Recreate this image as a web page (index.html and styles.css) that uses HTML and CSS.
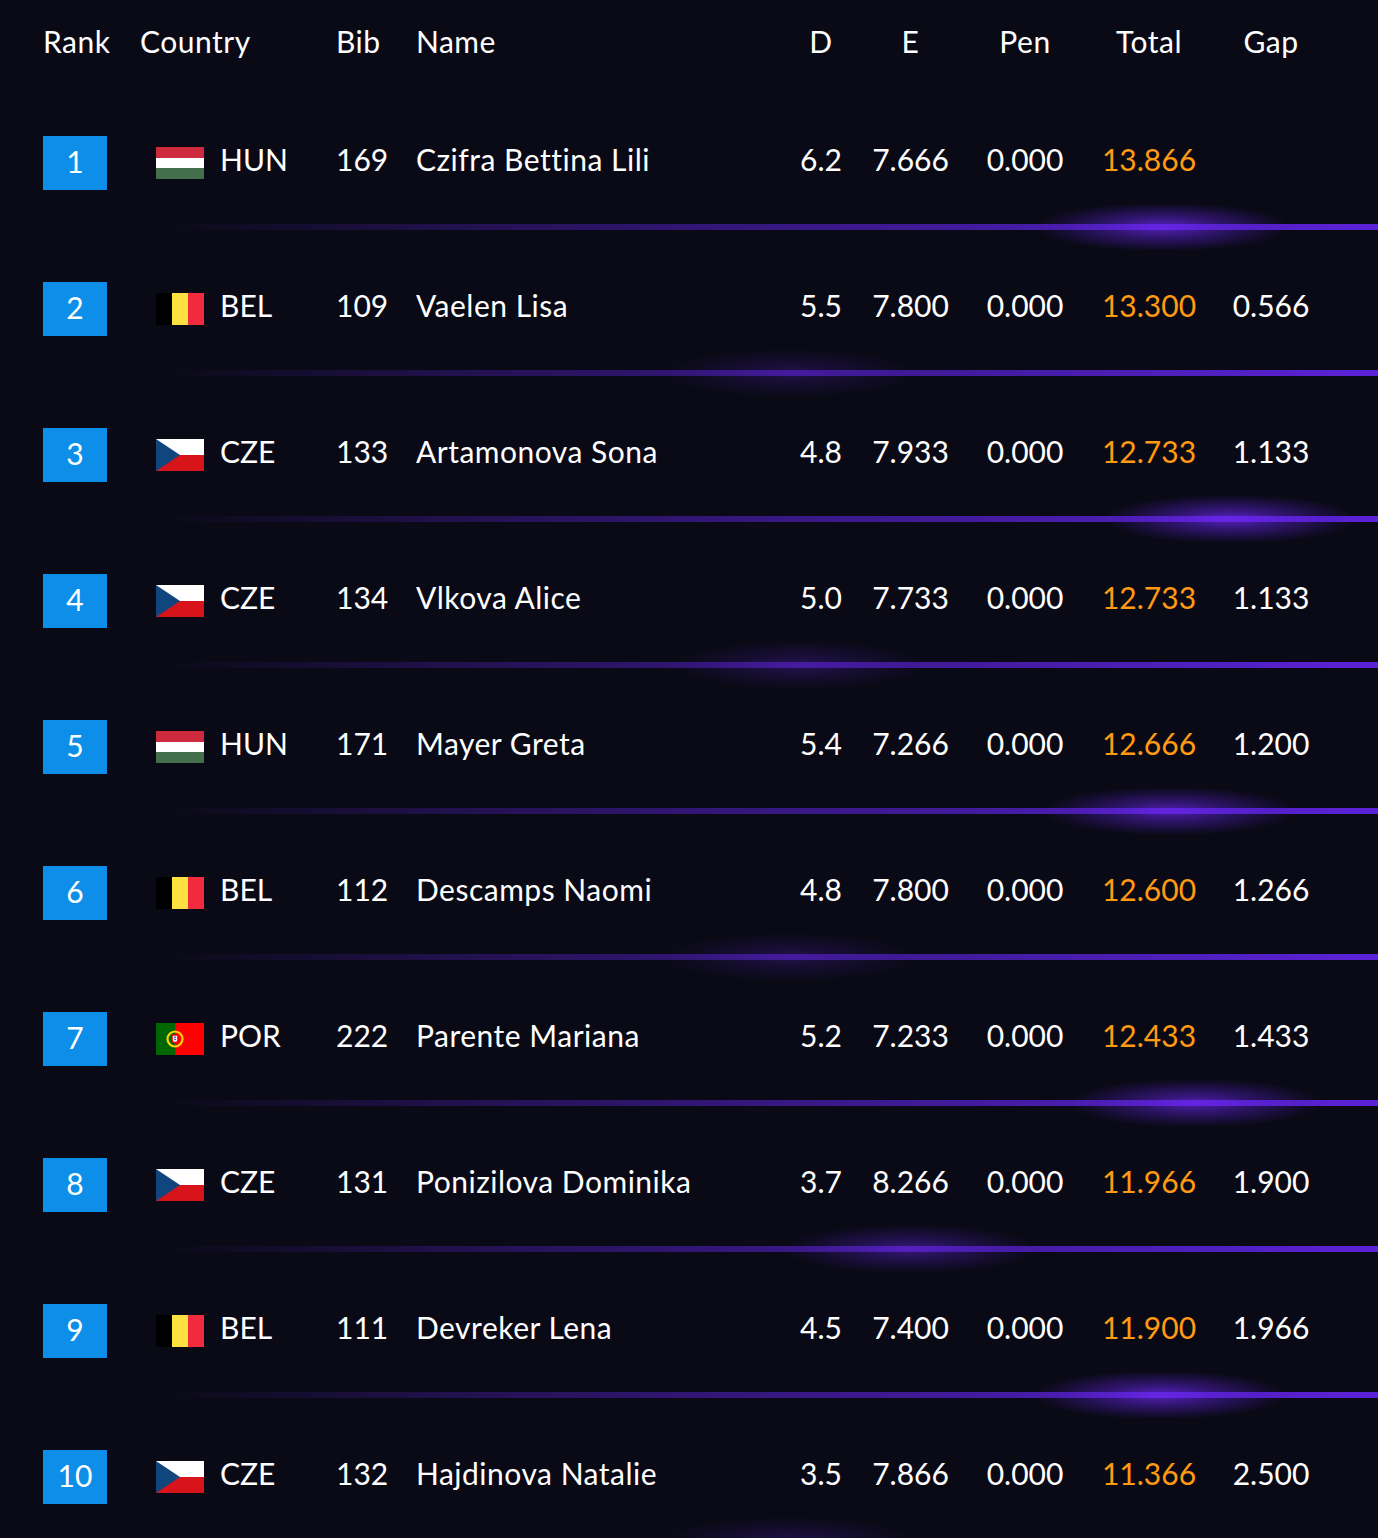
FILE: index.html
```html
<!DOCTYPE html>
<html lang="en">
<head>
<meta charset="utf-8">
<title>Results</title>
<link rel="stylesheet" href="styles.css">
</head>
<body>
<svg width="0" height="0" class="defs">
  <defs>
    <symbol id="f-hun" viewBox="0 0 48 32">
      <rect width="48" height="11" fill="#cd2a3e"/>
      <rect y="11" width="48" height="10" fill="#ffffff"/>
      <rect y="21" width="48" height="11" fill="#436f4d"/>
    </symbol>
    <symbol id="f-bel" viewBox="0 0 48 32">
      <rect width="16" height="32" fill="#000000"/>
      <rect x="16" width="16" height="32" fill="#fde03f"/>
      <rect x="32" width="16" height="32" fill="#ef2b3d"/>
    </symbol>
    <symbol id="f-cze" viewBox="0 0 48 32">
      <rect width="48" height="16" fill="#ffffff"/>
      <rect y="16" width="48" height="16" fill="#d7141a"/>
      <polygon points="0,0 24,16 0,32" fill="#11457e"/>
    </symbol>
    <symbol id="f-por" viewBox="0 0 48 32">
      <rect width="19" height="32" fill="#006600"/>
      <rect x="19" width="29" height="32" fill="#ff0000"/>
      <circle cx="19" cy="16" r="7.5" fill="none" stroke="#ffd700" stroke-width="2.2"/>
      <path d="M15.5 11.5h7v5.5a3.5 3.5 0 0 1-7 0z" fill="#ff0000"/>
      <path d="M16.8 12.8h4.4v4a2.2 2.2 0 0 1-4.4 0z" fill="#ffffff"/>
      <rect x="18.3" y="13.5" width="1.4" height="1.4" fill="#003399"/>
      <rect x="18.3" y="15.8" width="1.4" height="1.4" fill="#003399"/>
    </symbol>
  </defs>
</svg>

<div class="board">
  <div class="head">
    <div>Rank</div>
    <div>Country</div>
    <div>Bib</div>
    <div>Name</div>
    <div class="c">D</div>
    <div class="c">E</div>
    <div class="c">Pen</div>
    <div class="c">Total</div>
    <div class="c">Gap</div>
  </div>

  <div class="list">
    <div class="entry">
      <div class="row">
        <div class="rc"><span class="rank">1</span></div>
        <div class="country"><svg class="flag"><use href="#f-hun"/></svg><span>HUN</span></div>
        <div>169</div>
        <div class="name">Czifra Bettina Lili</div>
        <div class="c">6.2</div>
        <div class="c">7.666</div>
        <div class="c">0.000</div>
        <div class="c total">13.866</div>
        <div class="c"></div>
      </div>
      <div class="sep"><span class="glow" style="--x:1163px;--o:1"></span></div>
    </div>

    <div class="entry">
      <div class="row">
        <div class="rc"><span class="rank">2</span></div>
        <div class="country"><svg class="flag"><use href="#f-bel"/></svg><span>BEL</span></div>
        <div>109</div>
        <div class="name">Vaelen Lisa</div>
        <div class="c">5.5</div>
        <div class="c">7.800</div>
        <div class="c">0.000</div>
        <div class="c total">13.300</div>
        <div class="c">0.566</div>
      </div>
      <div class="sep"><span class="glow" style="--x:790px;--o:0.3"></span></div>
    </div>

    <div class="entry">
      <div class="row">
        <div class="rc"><span class="rank">3</span></div>
        <div class="country"><svg class="flag"><use href="#f-cze"/></svg><span>CZE</span></div>
        <div>133</div>
        <div class="name">Artamonova Sona</div>
        <div class="c">4.8</div>
        <div class="c">7.933</div>
        <div class="c">0.000</div>
        <div class="c total">12.733</div>
        <div class="c">1.133</div>
      </div>
      <div class="sep"><span class="glow" style="--x:1230px;--o:1"></span></div>
    </div>

    <div class="entry">
      <div class="row">
        <div class="rc"><span class="rank">4</span></div>
        <div class="country"><svg class="flag"><use href="#f-cze"/></svg><span>CZE</span></div>
        <div>134</div>
        <div class="name">Vlkova Alice</div>
        <div class="c">5.0</div>
        <div class="c">7.733</div>
        <div class="c">0.000</div>
        <div class="c total">12.733</div>
        <div class="c">1.133</div>
      </div>
      <div class="sep"><span class="glow" style="--x:800px;--o:0.35"></span></div>
    </div>

    <div class="entry">
      <div class="row">
        <div class="rc"><span class="rank">5</span></div>
        <div class="country"><svg class="flag"><use href="#f-hun"/></svg><span>HUN</span></div>
        <div>171</div>
        <div class="name">Mayer Greta</div>
        <div class="c">5.4</div>
        <div class="c">7.266</div>
        <div class="c">0.000</div>
        <div class="c total">12.666</div>
        <div class="c">1.200</div>
      </div>
      <div class="sep"><span class="glow" style="--x:1170px;--o:0.9"></span></div>
    </div>

    <div class="entry">
      <div class="row">
        <div class="rc"><span class="rank">6</span></div>
        <div class="country"><svg class="flag"><use href="#f-bel"/></svg><span>BEL</span></div>
        <div>112</div>
        <div class="name">Descamps Naomi</div>
        <div class="c">4.8</div>
        <div class="c">7.800</div>
        <div class="c">0.000</div>
        <div class="c total">12.600</div>
        <div class="c">1.266</div>
      </div>
      <div class="sep"><span class="glow" style="--x:790px;--o:0.3"></span></div>
    </div>

    <div class="entry">
      <div class="row">
        <div class="rc"><span class="rank">7</span></div>
        <div class="country"><svg class="flag"><use href="#f-por"/></svg><span>POR</span></div>
        <div>222</div>
        <div class="name">Parente Mariana</div>
        <div class="c">5.2</div>
        <div class="c">7.233</div>
        <div class="c">0.000</div>
        <div class="c total">12.433</div>
        <div class="c">1.433</div>
      </div>
      <div class="sep"><span class="glow" style="--x:1195px;--o:0.9"></span></div>
    </div>

    <div class="entry">
      <div class="row">
        <div class="rc"><span class="rank">8</span></div>
        <div class="country"><svg class="flag"><use href="#f-cze"/></svg><span>CZE</span></div>
        <div>131</div>
        <div class="name">Ponizilova Dominika</div>
        <div class="c">3.7</div>
        <div class="c">8.266</div>
        <div class="c">0.000</div>
        <div class="c total">11.966</div>
        <div class="c">1.900</div>
      </div>
      <div class="sep"><span class="glow" style="--x:910px;--o:0.6"></span></div>
    </div>

    <div class="entry">
      <div class="row">
        <div class="rc"><span class="rank">9</span></div>
        <div class="country"><svg class="flag"><use href="#f-bel"/></svg><span>BEL</span></div>
        <div>111</div>
        <div class="name">Devreker Lena</div>
        <div class="c">4.5</div>
        <div class="c">7.400</div>
        <div class="c">0.000</div>
        <div class="c total">11.900</div>
        <div class="c">1.966</div>
      </div>
      <div class="sep"><span class="glow" style="--x:1160px;--o:1"></span></div>
    </div>

    <div class="entry">
      <div class="row">
        <div class="rc"><span class="rank">10</span></div>
        <div class="country"><svg class="flag"><use href="#f-cze"/></svg><span>CZE</span></div>
        <div>132</div>
        <div class="name">Hajdinova Natalie</div>
        <div class="c">3.5</div>
        <div class="c">7.866</div>
        <div class="c">0.000</div>
        <div class="c total">11.366</div>
        <div class="c">2.500</div>
      </div>
      <div class="sep"><span class="glow" style="--x:790px;--o:0.3"></span></div>
    </div>
  </div>
</div>
</body>
</html>
```

FILE: styles.css
```css
html, body {
  margin: 0;
  padding: 0;
  background: #0a0a16;
}

body {
  color: #ffffff;
  font-family: Lato, "Open Sans", sans-serif;
  font-size: 30px;
  overflow: hidden;
}

.defs {
  position: absolute;
  width: 0;
  height: 0;
}

.board {
  width: 1378px;
}

.head,
.row {
  display: grid;
  grid-template-columns: 97px 196px 80px 360px 90px 89px 140px 108px 136px;
  align-items: center;
  padding-left: 43px;
  white-space: nowrap;
}

.head {
  height: 86px;
  letter-spacing: 0.5px;
}

.head > div {
  padding-bottom: 5px;
}

.list {
  padding-top: 16px;
}

.row {
  height: 122px;
}

.row > div {
  padding-bottom: 8px;
}

.row > .rc {
  padding-bottom: 0;
}

.name {
  letter-spacing: 0.5px;
}

.c {
  text-align: center;
}

.rank {
  display: flex;
  align-items: center;
  justify-content: center;
  box-sizing: border-box;
  width: 64px;
  height: 54px;
  padding-bottom: 4px;
  background: #0c8ee9;
  color: #ffffff;
}

.country {
  display: flex;
  align-items: center;
  gap: 16px;
  padding-left: 16px;
}

.country > span {
  margin-top: 0;
}

.flag {
  width: 48px;
  height: 32px;
  flex: none;
  display: block;
  margin-top: 8px;
}

.total {
  color: #ff9a12;
}

.sep {
  position: relative;
  height: 6px;
  margin-left: 165px;
  margin-bottom: 18px;
  background: linear-gradient(to right,
    rgba(91, 34, 216, 0) 0%,
    rgba(91, 34, 216, 0.3) 25%,
    rgba(91, 34, 216, 0.6) 55%,
    rgba(91, 34, 216, 1) 100%);
}

.glow {
  position: absolute;
  top: 50%;
  left: calc(var(--x) - 165px);
  width: 240px;
  height: 46px;
  transform: translate(-50%, -50%);
  opacity: var(--o);
  background: radial-gradient(ellipse at center,
    rgba(112, 40, 245, 0.75) 0%,
    rgba(100, 36, 230, 0.45) 30%,
    rgba(80, 28, 190, 0.18) 60%,
    rgba(60, 20, 150, 0) 75%);
  pointer-events: none;
}
```
